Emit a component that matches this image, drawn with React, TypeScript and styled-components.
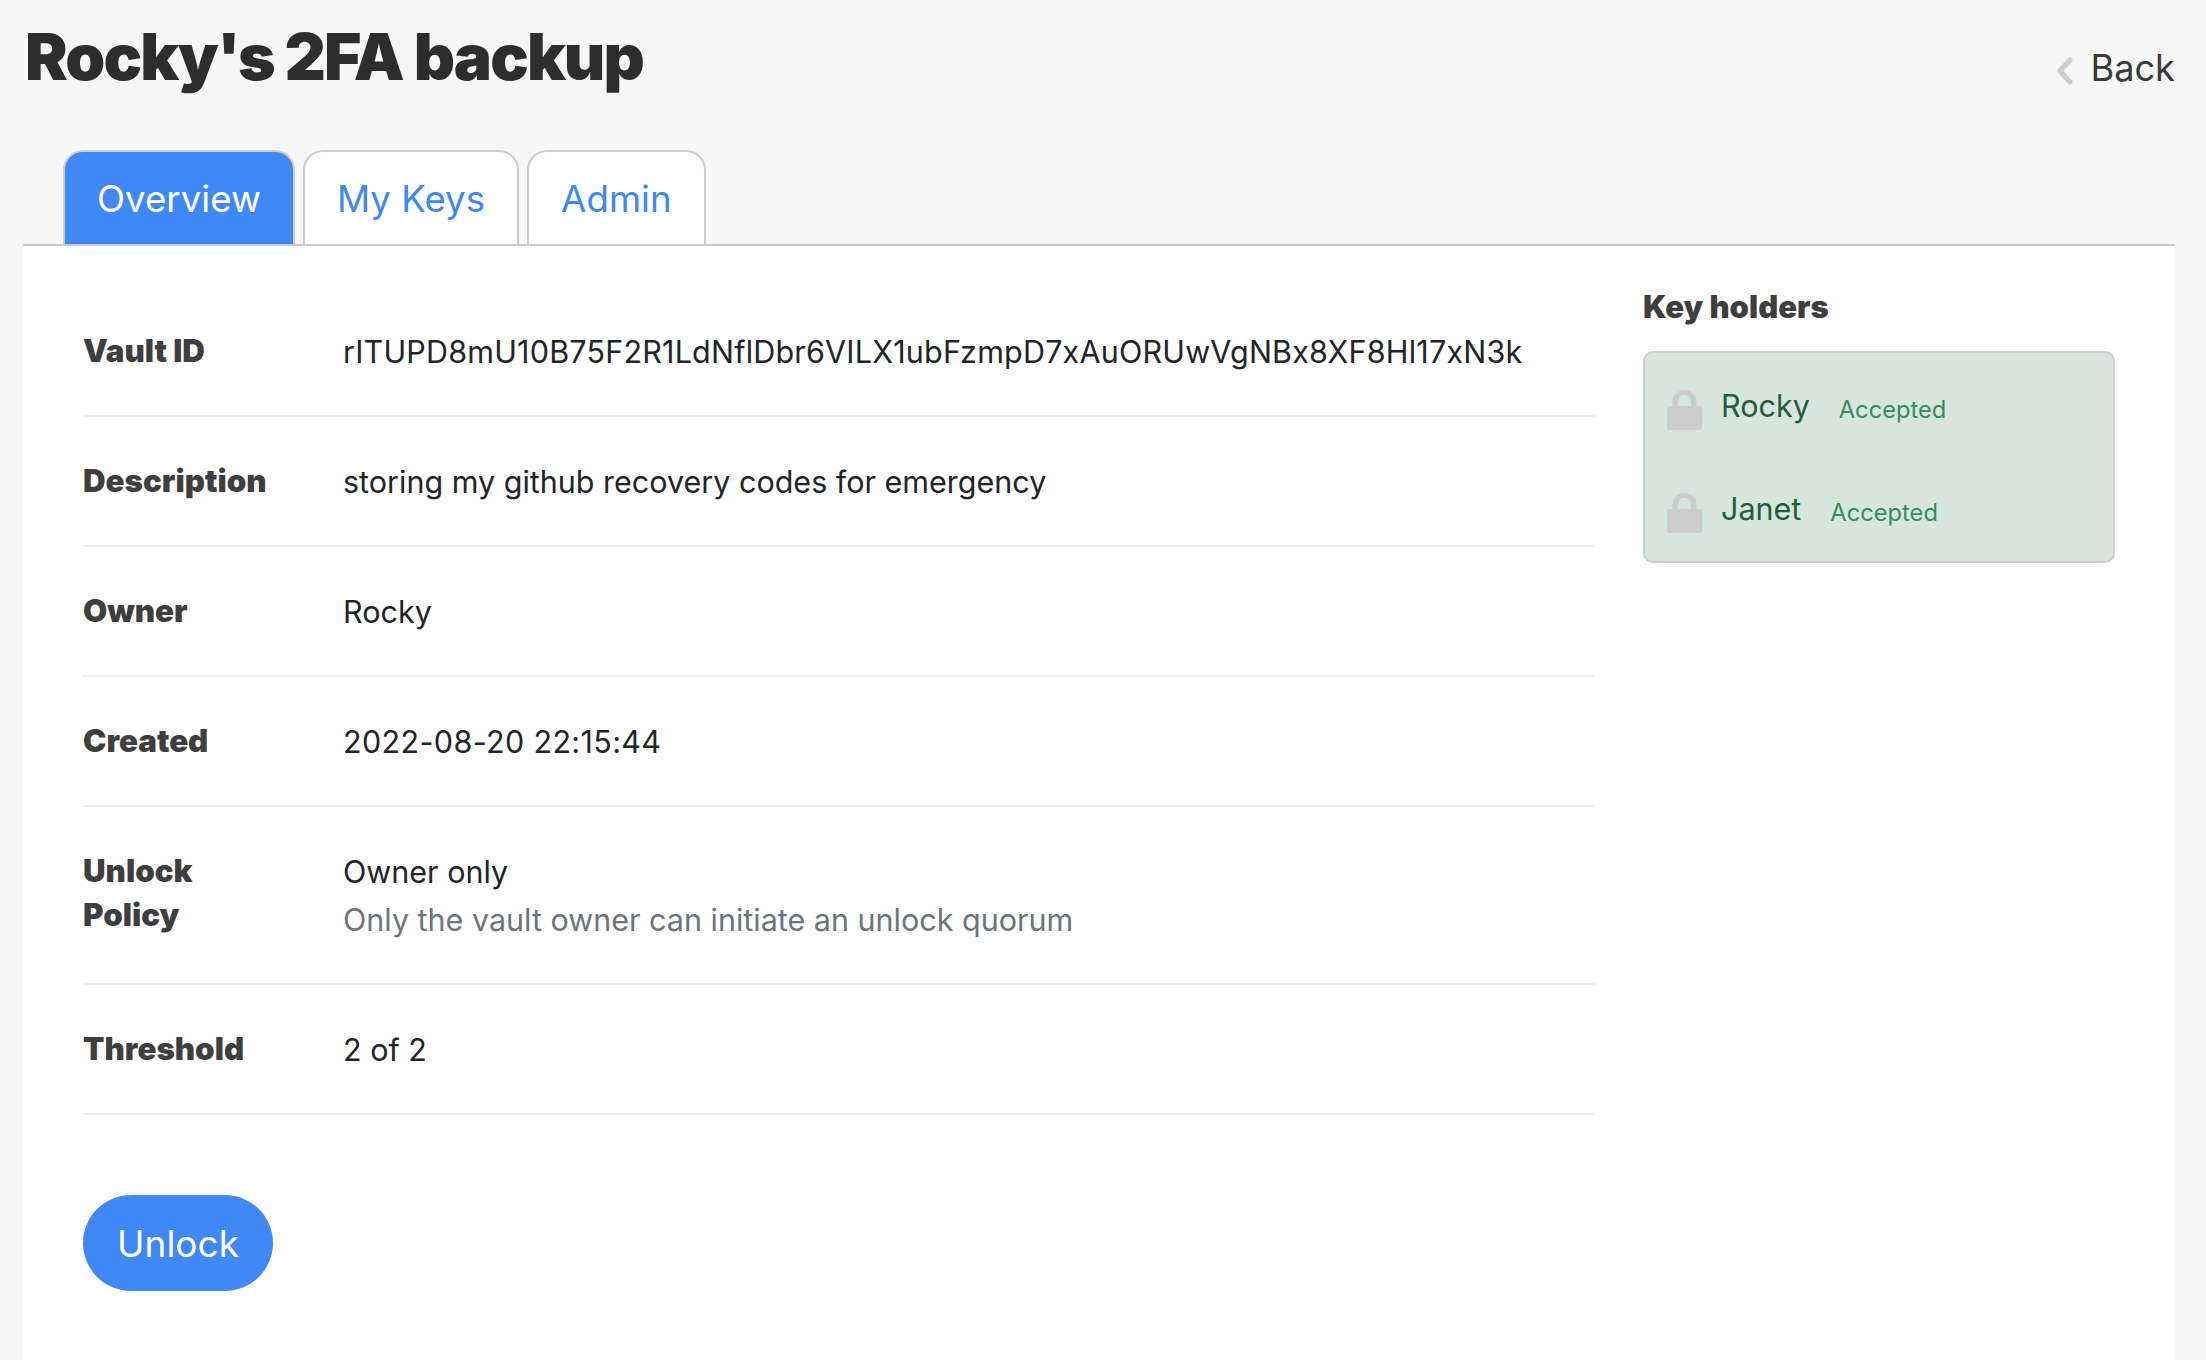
import React from "react";
import styled, { createGlobalStyle } from "styled-components";

const Global = createGlobalStyle`
  html, body { margin: 0; padding: 0; background: #f7f7f7; }
  body { font-family: Inter, "Liberation Sans", sans-serif; color: #212529; overflow: hidden; }
`;

const Page = styled.div`
  width: 2206px;
  height: 1360px;
  padding: 0 31px 0 23px;
  box-sizing: border-box;
  display: flex;
  flex-direction: column;
  overflow: hidden;
`;

const Header = styled.header`
  display: flex;
  justify-content: space-between;
  align-items: flex-start;
  height: 150px;
  flex: none;
`;

const Title = styled.h1`
  margin: 21px 0 0 2px;
  font-size: 64px;
  line-height: 72px;
  font-weight: 900;
  letter-spacing: -1.85px;
  color: #2d2d2d;
`;

const BackLink = styled.a`
  margin-top: 43px;
  display: flex;
  align-items: center;
  gap: 17px;
  font-size: 36.2px;
  line-height: 50px;
  color: #3a3a3a;
`;

const ChevronSvg = styled.svg`
  flex: none;
  margin-top: 5px;
`;

const Tabs = styled.nav`
  display: flex;
  gap: 8px;
  padding-left: 40px;
  border-bottom: 2px solid #cccccc;
  height: 94px;
  flex: none;
`;

const Tab = styled.a<{ $active?: boolean }>`
  display: flex;
  align-items: center;
  padding: 0 32px;
  height: 94px;
  box-sizing: border-box;
  border: 2px solid #cccccc;
  border-bottom: none;
  border-radius: 20px 20px 0 0;
  font-size: 36.7px;
  color: ${(p) => (p.$active ? "#ffffff" : "#3f88f5")};
  background: ${(p) => (p.$active ? "#3f88f5" : "#ffffff")};
`;

const Panel = styled.main`
  flex: 1;
  background: #ffffff;
  display: flex;
  align-items: flex-start;
  gap: 48px;
  padding: 41px 60px 0;
`;

const Details = styled.section`
  width: 1512px;
  flex: none;
`;

const Row = styled.div`
  display: grid;
  grid-template-columns: 260px 1fr;
  padding: 41px 0 39px;
  border-bottom: 2px solid #eeeeee;
`;

const Label = styled.div<{ $narrow?: boolean }>`
  margin-top: 1px;
  font-size: 31.3px;
  line-height: 44px;
  font-weight: 900;
  color: #3e3e3e;
  width: ${(p) => (p.$narrow ? "150px" : "220px")};
`;

const Value = styled.div<{ $spacing?: number }>`
  font-size: 30.5px;
  line-height: 48px;
  color: #212529;
  letter-spacing: ${(p) => p.$spacing ?? 0}px;
`;

const Hint = styled.div`
  color: #6c757d;
`;

const UnlockButton = styled.button`
  margin-top: 80px;
  width: 190px;
  height: 96px;
  border: none;
  border-radius: 48px;
  background: #3f88f5;
  color: #ffffff;
  font-family: inherit;
  font-size: 37px;
`;

const Side = styled.aside`
  flex: 1;
`;

const SideTitle = styled.h2`
  margin: -2px 0 22px 0;
  font-size: 31px;
  line-height: 44px;
  font-weight: 900;
  color: #3e3e3e;
`;

const HolderBox = styled.div`
  box-sizing: border-box;
  height: 212px;
  background: #d6e6df;
  border: 2px solid #cccccc;
  border-radius: 10px;
  padding: 29px 22px;
  display: flex;
  flex-direction: column;
  gap: 56px;
`;

const Holder = styled.div`
  display: flex;
  align-items: center;
  height: 48px;
`;

const HolderName = styled.span`
  margin-left: 19px;
  font-size: 30.5px;
  color: #245c3c;
`;

const Accepted = styled.span`
  margin-left: 29px;
  font-size: 23.7px;
  color: #3a8a5c;
  position: relative;
  top: 4px;
`;

const LockSvg = styled.svg`
  flex: none;
  position: relative;
  top: 4px;
`;

const Lock = () => (
  <LockSvg width="35" height="40" viewBox="0 0 35 40">
    <path
      fill="#cccccc"
      d="M17.5 0C10 0 5.500 5 5.500 12v4H3a3 3 0 0 0-3 3v18a3 3 0 0 0 3 3h29a3 3 0 0 0 3-3V19a3 3 0 0 0-3-3h-2.500v-4C29.500 5 25 0 17.500 0zM11 16v-4c0-4.500 2.500-7 6.500-7s6.500 2.500 6.500 7v4z"
    />
  </LockSvg>
);

const Chevron = () => (
  <ChevronSvg width="16" height="28" viewBox="0 0 16 28">
    <path d="M13 3L3 14l10 11" fill="none" stroke="#cccccc" strokeWidth="5" strokeLinecap="round" strokeLinejoin="round" />
  </ChevronSvg>
);

export default function App() {
  return (
    <>
      <Global />
      <Page>
        <Header>
          <Title>Rocky's 2FA backup</Title>
          <BackLink>
            <Chevron />
            Back
          </BackLink>
        </Header>
        <Tabs>
          <Tab $active>Overview</Tab>
          <Tab>My Keys</Tab>
          <Tab>Admin</Tab>
        </Tabs>
        <Panel>
          <Details>
            <Row>
              <Label>Vault ID</Label>
              <Value $spacing={0.2}>rITUPD8mU10B75F2R1LdNflDbr6VILX1ubFzmpD7xAuORUwVgNBx8XF8Hl17xN3k</Value>
            </Row>
            <Row>
              <Label>Description</Label>
              <Value>storing my github recovery codes for emergency</Value>
            </Row>
            <Row>
              <Label>Owner</Label>
              <Value>Rocky</Value>
            </Row>
            <Row>
              <Label>Created</Label>
              <Value $spacing={0.35}>2022-08-20 22:15:44</Value>
            </Row>
            <Row>
              <Label $narrow>Unlock Policy</Label>
              <Value>
                Owner only
                <Hint>Only the vault owner can initiate an unlock quorum</Hint>
              </Value>
            </Row>
            <Row>
              <Label>Threshold</Label>
              <Value>2 of 2</Value>
            </Row>
            <UnlockButton>Unlock</UnlockButton>
          </Details>
          <Side>
            <SideTitle>Key holders</SideTitle>
            <HolderBox>
              <Holder>
                <Lock />
                <HolderName>Rocky</HolderName>
                <Accepted>Accepted</Accepted>
              </Holder>
              <Holder>
                <Lock />
                <HolderName>Janet</HolderName>
                <Accepted>Accepted</Accepted>
              </Holder>
            </HolderBox>
          </Side>
        </Panel>
      </Page>
    </>
  );
}
